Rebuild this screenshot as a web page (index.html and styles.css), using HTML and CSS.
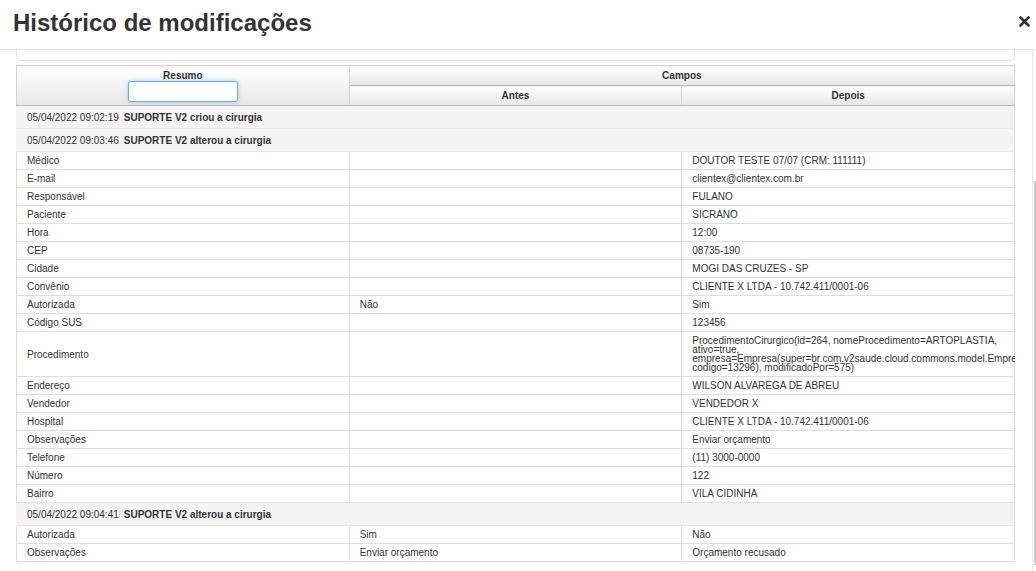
FILE: index.html
```html
<!DOCTYPE html>
<html lang="pt-BR">
  <head>
    <meta charset="UTF-8" />
    <meta name="viewport" content="width=device-width, initial-scale=1.0" />
    <link rel="stylesheet" href="styles.css">
  </head>
  <body>
    <div class="modal">
      <div class="modal-header">
        <h1 class="title">Histórico de modificações</h1>
        <button class="close" title="Fechar">
          <svg width="11" height="11" viewBox="0 0 11 11">
            <path d="M1.5 1.5 L9.5 9.5 M9.5 1.5 L1.5 9.5" stroke="#333" stroke-width="2.6" stroke-linecap="round" />
          </svg>
        </button>
      </div>

      <div class="modal-body">
        <div class="content">
          <div class="prev-panel"></div>

          <div class="table-wrap">
            <table class="history">
              <thead>
                <tr>
                  <th rowspan="2" class="summary">
                    Resumo
                    <input type="text" class="filter" />
                  </th>
                  <th colspan="2">Campos</th>
                </tr>
                <tr>
                  <th>Antes</th>
                  <th>Depois</th>
                </tr>
              </thead>
              <tbody>
                <tr class="group">
                  <td colspan="3"><span class="date">05/04/2022 09:02:19</span><b>SUPORTE V2 criou a cirurgia</b></td>
                </tr>
                <tr class="group">
                  <td colspan="3"><span class="date">05/04/2022 09:03:46</span><b>SUPORTE V2 alterou a cirurgia</b></td>
                </tr>
                <tr><td>Médico</td><td></td><td>DOUTOR TESTE 07/07 (CRM: 111111)</td></tr>
                <tr><td>E-mail</td><td></td><td>clientex@clientex.com.br</td></tr>
                <tr><td>Responsável</td><td></td><td>FULANO</td></tr>
                <tr><td>Paciente</td><td></td><td>SICRANO</td></tr>
                <tr><td>Hora</td><td></td><td>12:00</td></tr>
                <tr><td>CEP</td><td></td><td>08735-190</td></tr>
                <tr><td>Cidade</td><td></td><td>MOGI DAS CRUZES - SP</td></tr>
                <tr><td>Convênio</td><td></td><td>CLIENTE X LTDA - 10.742.411/0001-06</td></tr>
                <tr><td>Autorizada</td><td>Não</td><td>Sim</td></tr>
                <tr><td>Código SUS</td><td></td><td>123456</td></tr>
                <tr>
                  <td>Procedimento</td>
                  <td></td>
                  <td class="long">ProcedimentoCirurgico(id=264, nomeProcedimento=ARTOPLASTIA, ativo=true, empresa=Empresa(super=br.com.v2saude.cloud.commons.model.Empresa@1a2b3c, codigo=13296), modificadoPor=575)</td>
                </tr>
                <tr><td>Endereço</td><td></td><td>WILSON ALVAREGA DE ABREU</td></tr>
                <tr><td>Vendedor</td><td></td><td>VENDEDOR X</td></tr>
                <tr><td>Hospital</td><td></td><td>CLIENTE X LTDA - 10.742.411/0001-06</td></tr>
                <tr><td>Observações</td><td></td><td>Enviar orçamento</td></tr>
                <tr><td>Telefone</td><td></td><td>(11) 3000-0000</td></tr>
                <tr><td>Número</td><td></td><td>122</td></tr>
                <tr><td>Bairro</td><td></td><td>VILA CIDINHA</td></tr>
                <tr class="group">
                  <td colspan="3"><span class="date">05/04/2022 09:04:41</span><b>SUPORTE V2 alterou a cirurgia</b></td>
                </tr>
                <tr><td>Autorizada</td><td>Sim</td><td>Não</td></tr>
                <tr><td>Observações</td><td>Enviar orçamento</td><td>Orçamento recusado</td></tr>
              </tbody>
            </table>
          </div>
        </div>

        <div class="scrollbar">
          <div class="thumb"></div>
        </div>
      </div>
    </div>
  </body>
</html>
```

FILE: styles.css
```css
body {
  margin: 0;
  background-color: #fff;
  font-family: "Liberation Sans", Arial, sans-serif;
  color: #333;
  overflow: hidden;
}

.modal {
  width: 1036px;
  height: 571px;
  display: flex;
  flex-direction: column;
}

.modal-header {
  height: 49px;
  display: flex;
  justify-content: space-between;
  align-items: center;
  padding: 0 6px 0 13px;
  border-bottom: 1px solid #e8e8e8;
}

.title {
  margin: 0;
  font-size: 24px;
  font-weight: bold;
  color: #333;
  position: relative;
  top: -2px;
}

.close {
  border: none;
  background: none;
  padding: 0;
  width: 11px;
  height: 11px;
  cursor: pointer;
  position: relative;
  top: -3px;
}

.close svg {
  display: block;
}

.modal-body {
  flex: 1;
  display: flex;
  overflow: hidden;
}

.content {
  width: 1033px;
  padding-left: 16px;
  box-sizing: border-box;
}

.prev-panel {
  width: 999px;
  height: 11px;
  box-sizing: border-box;
  border: 1px solid #e0e0e0;
  border-top: none;
  border-radius: 0 0 5px 5px;
  margin-bottom: 4px;
}

.table-wrap {
  width: 999px;
  overflow: hidden;
}

.history {
  width: 999px;
  table-layout: fixed;
  border-collapse: collapse;
  font-size: 10px;
}

.history th {
  height: 18px;
  padding: 1px 4px 0;
  font-weight: bold;
  line-height: 12px;
  color: #333;
  background: linear-gradient(#ffffff, #e6e6e6);
  border: 1px solid #d3d3d3;
  border-bottom-color: #b8b8b8;
}

.history th.summary {
  vertical-align: top;
  padding-top: 4px;
}

.filter {
  display: block;
  width: 110px;
  height: 21px;
  box-sizing: border-box;
  margin: -1px auto 0;
  border: 1px solid #66afe9;
  border-radius: 3px;
  box-shadow: 0 0 4px rgba(102, 175, 233, 0.6);
  outline: none;
}

.history td {
  padding: 4px 3px 4px 10px;
  line-height: 9px;
  height: 9px;
  color: #333;
  border: 1px solid #dedede;
  vertical-align: middle;
}

.history td.long {
  white-space: normal;
}

.history tr.group td {
  background-color: #f4f4f4;
  padding: 7px 10px 5px;
  line-height: 10px;
  border-left-color: #f4f4f4;
  border-right-color: #dedede;
  border-bottom-color: #e9e9e9;
}

.group .date {
  margin-right: 5px;
}

.group b {
  color: #333;
}

.scrollbar {
  width: 3px;
  border-left: 1px solid #e8e8e8;
  display: flex;
  flex-direction: column;
}

.thumb {
  margin-top: 131px;
  margin-left: 1px;
  height: 384px;
  background-color: #c9c9c9;
}
```
